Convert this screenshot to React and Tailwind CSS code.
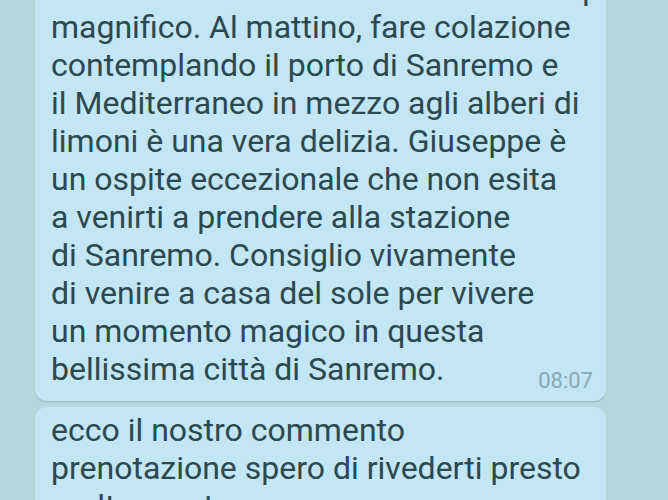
export default function App() {
  const lines = [
    "Casa del Sole ha una terrazza con un panorama",
    "magnifico. Al mattino, fare colazione",
    "contemplando il porto di Sanremo e",
    "il Mediterraneo in mezzo agli alberi di",
    "limoni è una vera delizia. Giuseppe è",
    "un ospite eccezionale che non esita",
    "a venirti a prendere alla stazione",
    "di Sanremo. Consiglio vivamente",
    "di venire a casa del sole per vivere",
    "un momento magico in questa",
  ];

  return (
    <div className="h-[500px] w-full overflow-hidden bg-[#b6d6de] font-['Roboto',sans-serif] text-[#2c4850]">
      <div className="mt-[-38px] ml-[35px] flex w-[571px] flex-col gap-[6px]">
        {/* primo messaggio */}
        <div className="rounded-[12px] bg-[#c3e5f4] px-4 pt-2 pb-[13px] shadow-[0_1px_1px_rgba(60,100,110,0.25)]">
          {lines.map((l, i) => (
            <div key={i} className="whitespace-nowrap text-[32px] leading-[38px]">
              {l}
            </div>
          ))}
          <div className="flex items-end justify-between">
            <span className="whitespace-nowrap text-[32px] leading-[38px]">
              bellissima città di Sanremo.
            </span>
            <span className="mr-[-3px] mb-[-7px] text-[22px] leading-[28px] text-[#88aab5]">08:07</span>
          </div>
        </div>

        {/* secondo messaggio */}
        <div className="rounded-[12px] bg-[#c3e5f4] px-4 pt-1 pb-2 shadow-[0_1px_1px_rgba(60,100,110,0.25)]">
          <div className="whitespace-nowrap text-[32px] leading-[38px]">ecco il nostro commento</div>
          <div className="whitespace-nowrap text-[32px] leading-[38px]">
            prenotazione spero di rivederti presto
          </div>
          <div className="whitespace-nowrap text-[32px] leading-[38px]">molto presto</div>
        </div>
      </div>
    </div>
  );
}
